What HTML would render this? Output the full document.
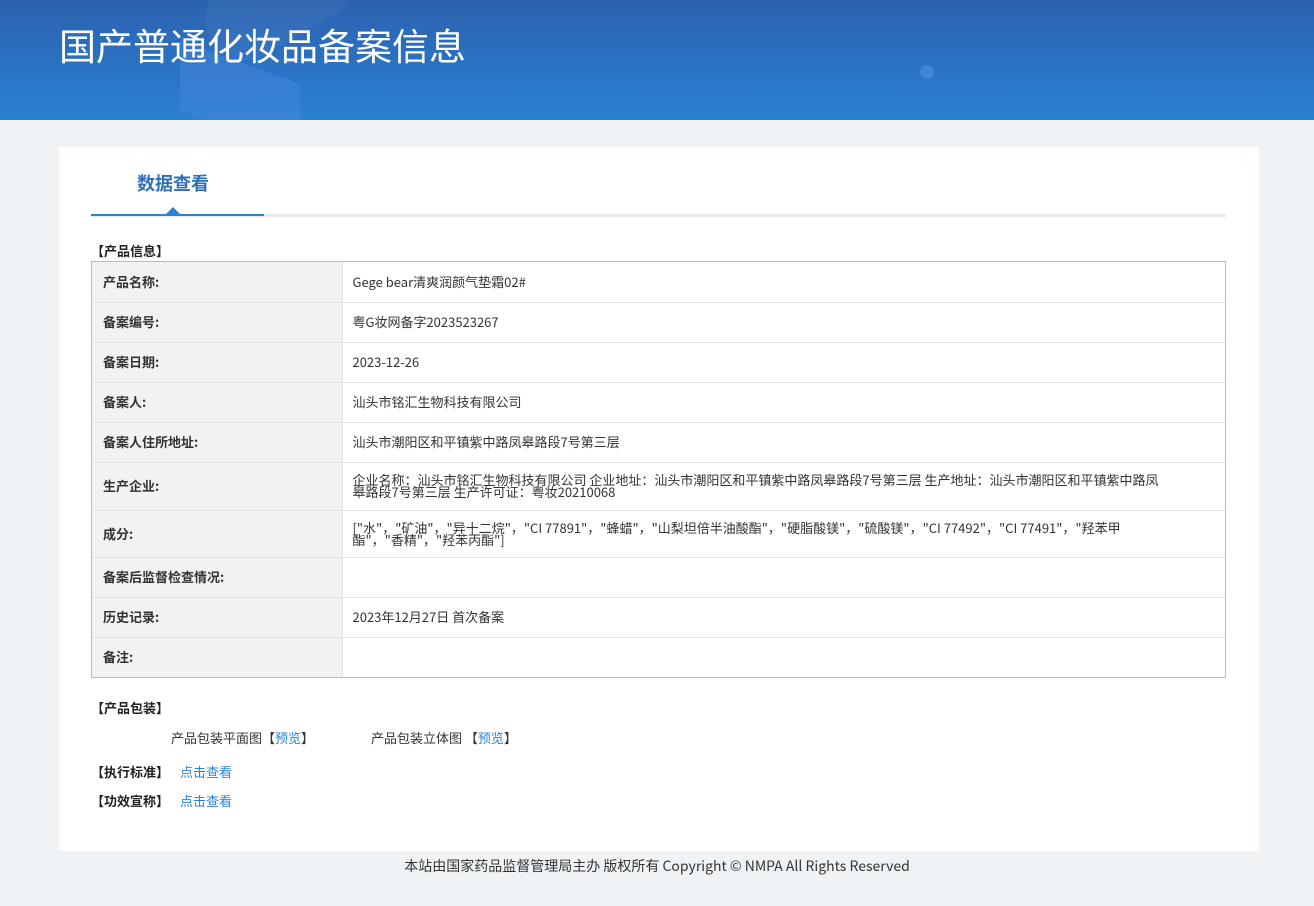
<!DOCTYPE html>
<html><head><meta charset="utf-8"><style>
*{margin:0;padding:0;box-sizing:border-box}
body{width:1314px;height:906px;background:#eff3f6;font-family:"Noto Sans CJK SC","Liberation Sans",sans-serif;color:#333;font-size:13px;position:relative;overflow:hidden;line-height:1.2}
.hdr{position:absolute;left:0;top:0;width:1314px;height:120px;background:linear-gradient(180deg,#2c62b0 0%,#2a80d2 100%);overflow:hidden}
.hdr .s1{position:absolute;left:180px;top:62px;width:120px;height:70px;background:rgba(80,140,230,.35);transform:skewY(20deg)}
.hdr .s2{position:absolute;left:200px;top:-40px;width:160px;height:80px;border-radius:40px;background:rgba(255,255,255,.04);transform:rotate(-30deg)}
.hdr .s4{position:absolute;left:920px;top:65px;width:14px;height:14px;border-radius:7px;background:rgba(100,170,240,.35)}
.hdr h1{position:absolute;left:59px;top:22px;font-size:37px;font-weight:normal;color:#fff;line-height:1.2}
.card{position:absolute;left:59px;top:147px;width:1200px;height:704px;background:#fff}
.tab{position:absolute;left:78px;top:26px;font-size:18px;font-weight:bold;color:#2e6fb7}
.line{position:absolute;left:32px;top:67px;width:1135px;height:3px;background:#e6e9ee}
.line b{position:absolute;left:0;top:0;width:173px;height:2px;background:#2a84d6}
.tri{position:absolute;left:107px;top:60px;width:0;height:0;border-left:7px solid transparent;border-right:7px solid transparent;border-bottom:7px solid #2a84d6}
.sec{position:absolute;left:32px;font-weight:bold;color:#222;font-size:13px}
.tw{position:absolute;left:32px;top:114px;width:1135px;border:1px solid #a9bfe0}
table{width:100%;border-collapse:collapse}
td{border-top:1px solid #e3e3e3;height:40px;vertical-align:middle;font-size:13px}
tr:first-child td{border-top:none}
td.l{width:250px;background:#f2f2f2;font-weight:bold;padding-left:11px;color:#333;border-right:1px solid #e3e3e3}
td.v{padding-left:10px;color:#333}
td.v div{width:810px;line-height:12px}
a{color:#2a84d6;text-decoration:none}
.ft{position:absolute;left:0;width:1314px;top:858px;text-align:center;font-size:14px;color:#333}
</style></head><body>
<div class="hdr"><div class="s2"></div><div class="s1"></div><div class="s4"></div><h1>国产普通化妆品备案信息</h1></div>
<div class="card">
<div class="tab">数据查看</div>
<div class="line"><b></b></div><div class="tri"></div>
<div class="sec" style="top:96px">【产品信息】</div>
<div class="tw"><table>
<tr><td class="l" style="height:40px">产品名称:</td><td class="v">Gege bear清爽润颜气垫霜02#</td></tr>
<tr><td class="l">备案编号:</td><td class="v">粤G妆网备字2023523267</td></tr>
<tr><td class="l">备案日期:</td><td class="v">2023-12-26</td></tr>
<tr><td class="l">备案人:</td><td class="v">汕头市铭汇生物科技有限公司</td></tr>
<tr><td class="l">备案人住所地址:</td><td class="v">汕头市潮阳区和平镇紫中路凤皋路段7号第三层</td></tr>
<tr><td class="l" style="height:48px">生产企业:</td><td class="v"><div>企业名称：汕头市铭汇生物科技有限公司 企业地址：汕头市潮阳区和平镇紫中路凤皋路段7号第三层 生产地址：汕头市潮阳区和平镇紫中路凤皋路段7号第三层 生产许可证：粤妆20210068</div></td></tr>
<tr><td class="l" style="height:47px">成分:</td><td class="v"><div>["水"，"矿油"，"异十二烷"，"CI 77891"，"蜂蜡"，"山梨坦倍半油酸酯"，"硬脂酸镁"，"硫酸镁"，"CI 77492"，"CI 77491"，"羟苯甲酯"，"香精"，"羟苯丙酯"]</div></td></tr>
<tr><td class="l">备案后监督检查情况:</td><td class="v"></td></tr>
<tr><td class="l">历史记录:</td><td class="v">2023年12月27日 首次备案</td></tr>
<tr><td class="l" style="height:40px">备注:</td><td class="v"></td></tr>
</table></div>
<div class="sec" style="top:553px">【产品包装】</div>
<div style="position:absolute;left:112px;top:583px">产品包装平面图【<a>预览</a>】</div>
<div style="position:absolute;left:312px;top:583px">产品包装立体图 【<a>预览</a>】</div>
<div class="sec" style="top:617px">【执行标准】 <a style="font-weight:normal;margin-left:8px">点击查看</a></div>
<div class="sec" style="top:646px">【功效宣称】 <a style="font-weight:normal;margin-left:8px">点击查看</a></div>
</div>
<div class="ft">本站由国家药品监督管理局主办 版权所有 Copyright © NMPA All Rights Reserved</div>
</body></html>
